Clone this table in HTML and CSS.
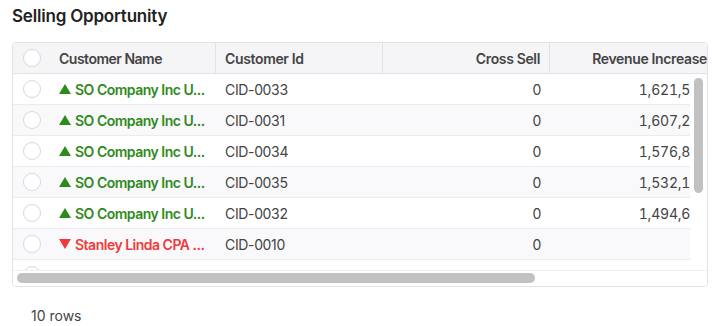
FILE: index.html
```html
<!DOCTYPE html>
<html>
<head>
<meta charset="utf-8">
<link rel="stylesheet" href="styles.css">
</head>
<body>
<div class="panel">
  <h2 class="title">Selling Opportunity</h2>
  <div class="grid">
    <div class="grid-head">
      <div class="row head-row">
        <div class="cell check"><span class="circle"></span></div>
        <div class="cell c-name">Customer Name</div>
        <div class="cell c-id">Customer Id</div>
        <div class="cell c-num">Cross Sell</div>
        <div class="cell c-num">Revenue Increase</div>
        <div class="cell c-num">Up Sell</div>
      </div>
    </div>
    <div class="grid-body">
      <div class="body-main">
        <div class="viewport">
          <div class="row">
            <div class="cell check"><span class="circle"></span></div>
            <div class="cell c-name up" title="SO Company Inc USA"><svg class="tri" viewBox="0 0 12 10"><path d="M6 0L12 10H0Z"/></svg><span class="txt">SO Company Inc U...</span></div>
            <div class="cell c-id">CID-0033</div>
            <div class="cell c-num">0</div>
            <div class="cell c-num val">1,621,538</div>
            <div class="cell c-num">12,400</div>
          </div>
          <div class="row">
            <div class="cell check"><span class="circle"></span></div>
            <div class="cell c-name up" title="SO Company Inc USA"><svg class="tri" viewBox="0 0 12 10"><path d="M6 0L12 10H0Z"/></svg><span class="txt">SO Company Inc U...</span></div>
            <div class="cell c-id">CID-0031</div>
            <div class="cell c-num">0</div>
            <div class="cell c-num val">1,607,214</div>
            <div class="cell c-num">11,200</div>
          </div>
          <div class="row">
            <div class="cell check"><span class="circle"></span></div>
            <div class="cell c-name up" title="SO Company Inc USA"><svg class="tri" viewBox="0 0 12 10"><path d="M6 0L12 10H0Z"/></svg><span class="txt">SO Company Inc U...</span></div>
            <div class="cell c-id">CID-0034</div>
            <div class="cell c-num">0</div>
            <div class="cell c-num val">1,576,842</div>
            <div class="cell c-num">10,900</div>
          </div>
          <div class="row">
            <div class="cell check"><span class="circle"></span></div>
            <div class="cell c-name up" title="SO Company Inc USA"><svg class="tri" viewBox="0 0 12 10"><path d="M6 0L12 10H0Z"/></svg><span class="txt">SO Company Inc U...</span></div>
            <div class="cell c-id">CID-0035</div>
            <div class="cell c-num">0</div>
            <div class="cell c-num val">1,532,176</div>
            <div class="cell c-num">9,800</div>
          </div>
          <div class="row">
            <div class="cell check"><span class="circle"></span></div>
            <div class="cell c-name up" title="SO Company Inc USA"><svg class="tri" viewBox="0 0 12 10"><path d="M6 0L12 10H0Z"/></svg><span class="txt">SO Company Inc U...</span></div>
            <div class="cell c-id">CID-0032</div>
            <div class="cell c-num">0</div>
            <div class="cell c-num val">1,494,653</div>
            <div class="cell c-num">9,100</div>
          </div>
          <div class="row">
            <div class="cell check"><span class="circle"></span></div>
            <div class="cell c-name down" title="Stanley Linda CPA PC"><svg class="tri" viewBox="0 0 12 10"><path d="M0 0H12L6 10Z"/></svg><span class="txt">Stanley Linda CPA ...</span></div>
            <div class="cell c-id">CID-0010</div>
            <div class="cell c-num">0</div>
            <div class="cell c-num val"></div>
            <div class="cell c-num"></div>
          </div>
          <div class="row">
            <div class="cell check"><span class="circle"></span></div>
            <div class="cell c-name down" title="Stanley Linda CPA PC"><svg class="tri" viewBox="0 0 12 10"><path d="M0 0H12L6 10Z"/></svg><span class="txt">Stanley Linda CPA ...</span></div>
            <div class="cell c-id">CID-0011</div>
            <div class="cell c-num">0</div>
            <div class="cell c-num val"></div>
            <div class="cell c-num"></div>
          </div>
        </div>
        <div class="vtrack"><div class="vthumb"></div></div>
      </div>
      <div class="hbar">
        <div class="htrack"><div class="hthumb"></div></div>
        <div class="corner"></div>
      </div>
    </div>
  </div>
  <div class="footer">10 rows</div>
</div>
</body>
</html>
```
FILE: styles.css
```css
html, body {
  margin: 0;
  padding: 0;
  background: #ffffff;
}
body {
  font-family: Inter, "Noto Sans", "Liberation Sans", sans-serif;
  color: #444444;
}
.panel {
  padding: 5px 12px 0 12px;
}
.title {
  margin: 0;
  font-size: 17px;
  line-height: 22px;
  font-weight: 600;
  letter-spacing: -0.2px;
  color: #222222;
}
.grid {
  margin-top: 15px;
  border: 1px solid #e2e2e4;
  border-radius: 4px;
  overflow: hidden;
  width: 694px;
}
.grid-head {
  overflow: hidden;
  background: #f5f5f7;
  border-bottom: 1px solid #e4e4e6;
}
.row {
  display: flex;
  width: 871px;
  height: 31px;
  box-sizing: border-box;
  border-bottom: 1px solid #ececee;
  font-size: 14px;
  letter-spacing: -0.35px;
}
.head-row {
  height: 30px;
  border-bottom: none;
  font-weight: 600;
  color: #444444;
}
.head-row .cell {
  border-right: 1px solid #e2e2e4;
}
.head-row .check {
  border-right: none;
}
.cell {
  flex: none;
  box-sizing: border-box;
  height: 100%;
  display: flex;
  align-items: center;
  padding: 0 9px;
  white-space: nowrap;
  overflow: hidden;
}
.check {
  width: 37px;
  padding: 0;
  justify-content: center;
}
.circle {
  display: block;
  width: 18px;
  height: 18px;
  box-sizing: border-box;
  border: 1px solid #d9d9db;
  border-radius: 50%;
  background: #ffffff;
}
.c-name {
  width: 166px;
  padding-right: 3px;
  font-weight: 600;
  letter-spacing: -0.5px;
}
.c-id {
  width: 167px;
}
.c-num {
  width: 167px;
  justify-content: flex-end;
}
.val {
  letter-spacing: -0.2px;
  font-variant-numeric: tabular-nums;
}
.txt {
  overflow: hidden;
  white-space: nowrap;
  min-width: 0;
}
.tri {
  flex: none;
  width: 12px;
  height: 10px;
  margin-right: 4px;
}
.up {
  color: #2f8a1c;
}
.up .tri {
  fill: #2f8a1c;
}
.down {
  color: #f03a3a;
}
.down .tri {
  fill: #f03a3a;
}
.grid-body {
  display: flex;
  flex-direction: column;
  background: #ffffff;
}
.body-main {
  display: flex;
  height: 196px;
}
.viewport {
  width: 677px;
  height: 196px;
  overflow: hidden;
  box-shadow: 4px 0 6px -4px rgba(0, 0, 0, 0.08);
}
.viewport .row:nth-child(even) {
  background: #f9f9fb;
}
.vtrack {
  width: 17px;
  flex: none;
  box-sizing: border-box;
  padding: 4px 4px 0 4px;
  background: #ffffff;
}
.vthumb {
  width: 9px;
  height: 115px;
  border-radius: 5px;
  background: #c1c1c1;
}
.hbar {
  display: flex;
  height: 15px;
  border-top: 1px solid #f0f0f2;
}
.htrack {
  width: 677px;
  box-sizing: border-box;
  padding: 2px 4px 0 4px;
}
.hthumb {
  width: 518px;
  height: 10px;
  border-radius: 5px;
  background: #c1c1c1;
}
.corner {
  width: 17px;
}
.footer {
  margin-top: 20px;
  padding-left: 19px;
  font-size: 14px;
  color: #444444;
}
```
